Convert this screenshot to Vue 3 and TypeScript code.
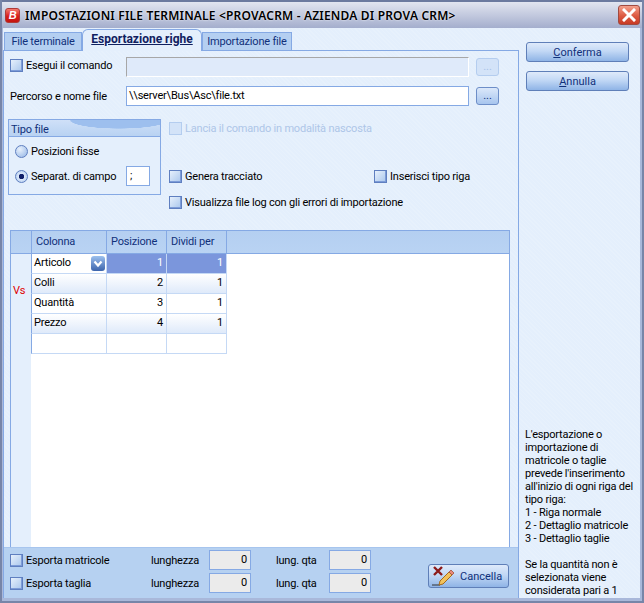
<script setup lang="ts">
interface Row { name: string; pos: string; div: string }
const rows: Row[] = [
  { name: 'Colli', pos: '2', div: '1' },
  { name: 'Quantità', pos: '3', div: '1' },
  { name: 'Prezzo', pos: '4', div: '1' },
  { name: '', pos: '', div: '' }
]
const help: string[] = [
  "L'esportazione o", 'importazione di', 'matricole o taglie', "prevede l'inserimento",
  "all'inizio di ogni riga del", 'tipo riga:', '1 - Riga normale', '2 - Dettaglio matricole',
  '3 - Dettaglio taglie', '\u00a0', 'Se la quantità non è', 'selezionata viene', 'considerata pari a 1'
]
const footRows: string[] = ['Esporta matricole', 'Esporta taglia']
</script>

<template>
  <div class="window">
    <header class="titlebar">
      <span class="logo">B</span>
      <span class="title">IMPOSTAZIONI FILE TERMINALE &lt;PROVACRM - AZIENDA DI PROVA CRM&gt;</span>
      <button class="close" aria-label="Chiudi">
        <svg width="14" height="14" viewBox="0 0 14 14"><path d="M2 2 L12 12 M12 2 L2 12" stroke="#fff" stroke-width="3" stroke-linecap="square" /></svg>
      </button>
    </header>

    <div class="client">
      <div class="main">
        <nav class="tabs">
          <span class="tab">File terminale</span>
          <span class="tab active">Esportazione righe</span>
          <span class="tab last">Importazione file</span>
        </nav>

        <section class="panel">
          <div class="form">
            <div class="row">
              <label class="check lead"><i class="box"></i>Esegui il comando</label>
              <span class="input wide disabled"></span>
              <button class="dots off">...</button>
            </div>
            <div class="row second">
              <label class="lead plain">Percorso e nome file</label>
              <span class="input wide">\\server\Bus\Asc\file.txt</span>
              <button class="dots">...</button>
            </div>

            <div class="lower">
              <fieldset class="group">
                <div class="group-head">Tipo file</div>
                <div class="group-row first"><i class="radio"></i>Posizioni fisse</div>
                <div class="group-row"><i class="radio on"></i>Separat. di campo<span class="input sep">;</span></div>
              </fieldset>
              <div class="options">
                <label class="check muted"><i class="box off"></i>Lancia il comando in modalità nascosta</label>
                <div class="opt-row">
                  <label class="check genera"><i class="box"></i>Genera tracciato</label>
                  <label class="check"><i class="box"></i>Inserisci tipo riga</label>
                </div>
                <label class="check log"><i class="box"></i>Visualizza file log con gli errori di importazione</label>
              </div>
            </div>
          </div>

          <div class="grid">
            <div class="grid-head">
              <span class="gutter-h"></span>
              <span class="h c1">Colonna</span>
              <span class="h c2">Posizione</span>
              <span class="h c3">Dividi per</span>
            </div>
            <div class="grid-body">
              <div class="gutter"><span class="vs">Vs</span></div>
              <div class="cells">
                <div class="grow">
                  <span class="cell c1 name">Articolo
                    <span class="drop">
                      <svg width="10" height="8" viewBox="0 0 10 8"><path d="M1.5 1.5 L5 5.5 L8.5 1.5" fill="none" stroke="#fff" stroke-width="2.2" /></svg>
                    </span>
                  </span>
                  <span class="cell c2 sel">1</span>
                  <span class="cell c3 sel">1</span>
                </div>
                <div v-for="(r, i) in rows" :key="i" class="grow" :class="{ alt: i % 2 === 0 }">
                  <span class="cell c1 name">{{ r.name }}</span>
                  <span class="cell c2">{{ r.pos }}</span>
                  <span class="cell c3">{{ r.div }}</span>
                </div>
              </div>
            </div>
          </div>

          <footer class="foot">
            <div class="foot-rows">
              <div v-for="label in footRows" :key="label" class="foot-row">
                <label class="check f-label"><i class="box"></i>{{ label }}</label>
                <span class="f-cap">lunghezza</span>
                <span class="num">0</span>
                <span class="f-cap2">lung. qta</span>
                <span class="num">0</span>
              </div>
            </div>
            <button class="btn cancel">
              <svg width="24" height="22" viewBox="0 0 24 22">
                <path d="M3 2 L11 10 M11 2 L3 10" stroke="#8c1a1a" stroke-width="2.4" />
                <path d="M1 20 H9" stroke="#333" stroke-width="1" />
                <path d="M9 16 L18 7 L21 10 L12 19 L8 20 Z" fill="#f1c25c" stroke="#a66a1c" stroke-width="1" />
                <path d="M18 7 L20 5 L23 8 L21 10 Z" fill="#e98a7a" stroke="#a0503c" stroke-width="0.8" />
              </svg>
              <span>Cancella</span>
            </button>
          </footer>
        </section>
      </div>

      <aside class="side">
        <button class="btn cmd"><span><u>C</u>onferma</span></button>
        <button class="btn cmd"><span><u>A</u>nnulla</span></button>
        <div class="help">
          <div v-for="(l, i) in help" :key="i">{{ l }}</div>
        </div>
      </aside>
    </div>
  </div>
</template>

<style>
html, body { margin: 0; background: #e4effc; }
</style>

<style scoped>
.window {
  width: 644px;
  height: 603px;
  box-sizing: border-box;
  display: flex;
  flex-direction: column;
  overflow: hidden;
  background: #a9b8da;
  border: solid #7785a8;
  border-width: 0 2px 2px 2px;
  font: 11px Roboto, Tahoma, sans-serif;
  letter-spacing: -0.2px;
  color: #000;
}
.titlebar {
  height: 28px;
  flex: none;
  box-sizing: border-box;
  margin: 0 -2px;
  padding: 0 4px 0 5px;
  display: flex;
  align-items: center;
  border-top: 2px solid #6c7a9f;
  background: linear-gradient(#e2e5f0 0, #c9cfe2 40%, #a4aecd 100%);
}
.logo {
  width: 15px;
  height: 15px;
  flex: none;
  box-sizing: border-box;
  border-radius: 3px;
  margin-top: 1px;
  background: linear-gradient(#f47b70, #d81f1c 55%, #c5140f);
  border: 1px solid #b03a36;
  color: #fff;
  font: italic bold 11px/13px "Liberation Sans", sans-serif;
  text-align: center;
}
.title {
  margin-left: 5px;
  font: 600 12px "Noto Sans", sans-serif;
  letter-spacing: 0.18px;
  white-space: nowrap;
  flex: 1;
  text-shadow: 0 0 2px #fff;
}
.close {
  width: 22px;
  height: 20px;
  padding: 0;
  display: flex;
  align-items: center;
  justify-content: center;
  border: 1px solid #a04a40;
  border-radius: 3px;
  background: linear-gradient(#f4a08c, #dc5a42 55%, #c83a24);
}
.client {
  flex: 1;
  min-height: 0;
  display: flex;
  margin: 0 2px 3px 1px;
  background: #e4effc;
  background-image: repeating-linear-gradient(45deg, rgba(255,255,255,.12) 0 1px, transparent 1px 3px);
}
.main {
  width: 516px;
  flex: none;
  display: flex;
  flex-direction: column;
}
.tabs {
  height: 22px;
  flex: none;
  display: flex;
  align-items: flex-end;
  padding-left: 1px;
  box-sizing: border-box;
  position: relative;
  z-index: 1;
}
.tab {
  box-sizing: border-box;
  height: 18px;
  width: 78px;
  text-align: center;
  color: #10307a;
  font-size: 11px;
  line-height: 17px;
  background: #b4cff1;
  border: 1px solid #85a9e4;
  border-bottom: none;
  white-space: nowrap;
}
.tab.active {
  width: 120px;
  height: 22px;
  background: #e4effc;
  border-color: #85a9e4;
  border-radius: 6px 6px 0 0;
  font-weight: 700;
  font-size: 12px;
  letter-spacing: 0;
  text-decoration: underline;
  color: #10205f;
  line-height: 19px;
  margin-bottom: -1px;
}
.tab.last { width: 90px; }
.panel {
  flex: 1;
  min-height: 0;
  display: flex;
  flex-direction: column;
  box-sizing: border-box;
  border: solid #85a9e4;
  border-width: 1px 1px 0 1px;
}
.form {
  height: 179px;
  flex: none;
  box-sizing: border-box;
  padding: 6px 0 0 6px;
}
.row { display: flex; align-items: center; height: 20px; }
.row.second { margin-top: 9px; }
.lead { width: 116px; flex: none; }
.plain { white-space: nowrap; }
.row .check { align-self: flex-start; height: 17px; }
.check { display: flex; align-items: center; white-space: nowrap; color: #000; }
.box {
  width: 13px;
  height: 13px;
  flex: none;
  box-sizing: border-box;
  margin-right: 3px;
  border: 1px solid #5f7fc0;
  background: linear-gradient(135deg, #e6f0fc, #a9c6ec);
  box-shadow: inset -1px -1px 0 #7d9cd8;
}
.box.off { border-color: #b4cdef; background: #d3e3f8; box-shadow: none; }
.muted { color: #aec6e8; }
.input {
  box-sizing: border-box;
  display: block;
  height: 20px;
  background: #fff;
  border: 1px solid #85a9e4;
  padding-left: 2px;
  line-height: 18px;
  color: #000;
  white-space: nowrap;
}
.wide { width: 343px; flex: none; }
.disabled { background: #dfeafa; border-color: #a7a7a7 #fff #fff #a7a7a7; }
.dots {
  margin-left: 7px;
  width: 23px;
  height: 18px;
  padding: 0;
  flex: none;
  font: 11px/14px Roboto, sans-serif;
  color: #10307a;
  border: 1px solid #6d8ec8;
  border-radius: 3px;
  background: linear-gradient(#dbe8fa, #a7c5ee);
}
.dots.off { color: #a8c2e8; border-color: #b4cdef; background: #d3e3f8; }
.lower { display: flex; margin-top: 13px; }
.group {
  width: 153px;
  height: 76px;
  flex: none;
  box-sizing: border-box;
  margin: 0 0 0 -2px;
  padding: 0;
  border: 1px solid #85a9e4;
  background: #e4effc;
}
.group-head {
  height: 17px;
  box-sizing: border-box;
  padding: 2px 0 0 2px;
  line-height: 16px;
  color: #10307a;
  border-bottom: 1px solid #85a9e4;
  background: radial-gradient(80px 14px at 110px 0, #9dbfee 60%, transparent 62%), linear-gradient(#cfe0f8, #b8d2f2);
}
.group-row {
  display: flex;
  align-items: center;
  height: 20px;
  margin-left: 6px;
  white-space: nowrap;
}
.group-row.first { margin-top: 4px; margin-bottom: 5px; }
.radio {
  width: 13px;
  height: 13px;
  flex: none;
  box-sizing: border-box;
  border-radius: 50%;
  margin-right: 3px;
  border: 1px solid #5f7fc0;
  background: radial-gradient(circle at 35% 30%, #e8f1fc, #93b5e6);
}
.radio.on { background: radial-gradient(circle, #10206a 0 2.5px, #dbe8fa 3px, #a9c6ec 100%); }
.sep { width: 24px; margin-left: auto; margin-right: 10px; padding-left: 3px; }
.options { margin-left: 8px; display: flex; flex-direction: column; padding-top: 2px; }
.options .muted { height: 14px; }
.opt-row { display: flex; margin-top: 34px; height: 14px; }
.genera { width: 205px; }
.log { margin-top: 12px; height: 14px; }
.grid {
  flex: 1;
  min-height: 0;
  margin: 0 8px 0 6px;
  display: flex;
  flex-direction: column;
  background: #fff;
  border: solid #85a9e4;
  border-width: 1px 1px 0 1px;
}
.grid-head {
  height: 22px;
  flex: none;
  display: flex;
  background: linear-gradient(#b4cff1, #b9d3f3);
  border-bottom: 1px solid #85a9e4;
}
.gutter-h { width: 20px; flex: none; border-right: 1px solid #85a9e4; }
.h {
  box-sizing: border-box;
  padding-left: 4px;
  line-height: 22px;
  color: #10307a;
  border-right: 1px solid #85a9e4;
}
.c1 { width: 75px; flex: none; }
.c2 { width: 60px; flex: none; }
.c3 { width: 60px; flex: none; }
.grid-body { flex: 1; min-height: 0; display: flex; }
.gutter {
  width: 20px;
  flex: none;
  background: #e4effc;
  display: flex;
  flex-direction: column;
}
.vs { color: #e00000; margin: 30px 0 0 2px; line-height: 14px; }
.cells { display: flex; flex-direction: column; }
.grow { display: flex; height: 20px; }
.cell {
  box-sizing: border-box;
  height: 20px;
  line-height: 17px;
  text-align: right;
  padding-right: 3px;
  border-right: 1px solid #c5d9f5;
  border-bottom: 1px solid #c5d9f5;
  white-space: nowrap;
}
.alt .cell { background: linear-gradient(#fff, #dfeafa); }
.name { text-align: left; padding-left: 2px; position: relative; border-left: 1px solid #85a9e4; width: 76px; }
.sel { background: #7b96dc; color: #fff; }
.drop {
  position: absolute;
  right: 1px;
  top: 2px;
  width: 14px;
  height: 15px;
  border-radius: 3px;
  display: flex;
  align-items: center;
  justify-content: center;
  background: linear-gradient(#9cc0ee, #3c64ac);
}
.foot {
  height: 51px;
  flex: none;
  box-sizing: border-box;
  display: flex;
  padding: 2px 0 0 6px;
  background: #b6d1f1;
  border-top: 1px solid #a7c5ee;
}
.foot-rows { display: flex; flex-direction: column; gap: 3px; }
.foot-row { display: flex; align-items: center; height: 20px; }
.f-label { width: 141px; flex: none; }
.f-cap { width: 58px; flex: none; }
.f-cap2 { width: 53px; flex: none; margin-left: 25px; }
.num {
  width: 42px;
  height: 20px;
  flex: none;
  box-sizing: border-box;
  border: 1px solid #85a9e4;
  background: #ebebeb;
  text-align: right;
  padding-right: 3px;
  line-height: 18px;
}
.btn {
  display: flex;
  align-items: center;
  justify-content: center;
  padding: 0;
  box-sizing: border-box;
  border: 1px solid #5f7fb8;
  border-radius: 3px;
  background: linear-gradient(#dfeafa, #c2d8f5 45%, #8fb4e6);
  color: #10307a;
  font: 11px Roboto, sans-serif;
}
.cancel {
  width: 81px;
  height: 24px;
  margin: 14px 0 0 57px;
  gap: 5px;
  justify-content: flex-start;
  padding-left: 2px;
}
.side {
  flex: 1;
  display: flex;
  flex-direction: column;
  padding: 14px 0 0 7px;
  min-width: 0;
}
.cmd { width: 103px; height: 20px; margin-bottom: 9px; }
.help {
  margin-top: auto;
  margin-bottom: 1px;
  margin-left: -1px;
  line-height: 13px;
  white-space: nowrap;
}
</style>
